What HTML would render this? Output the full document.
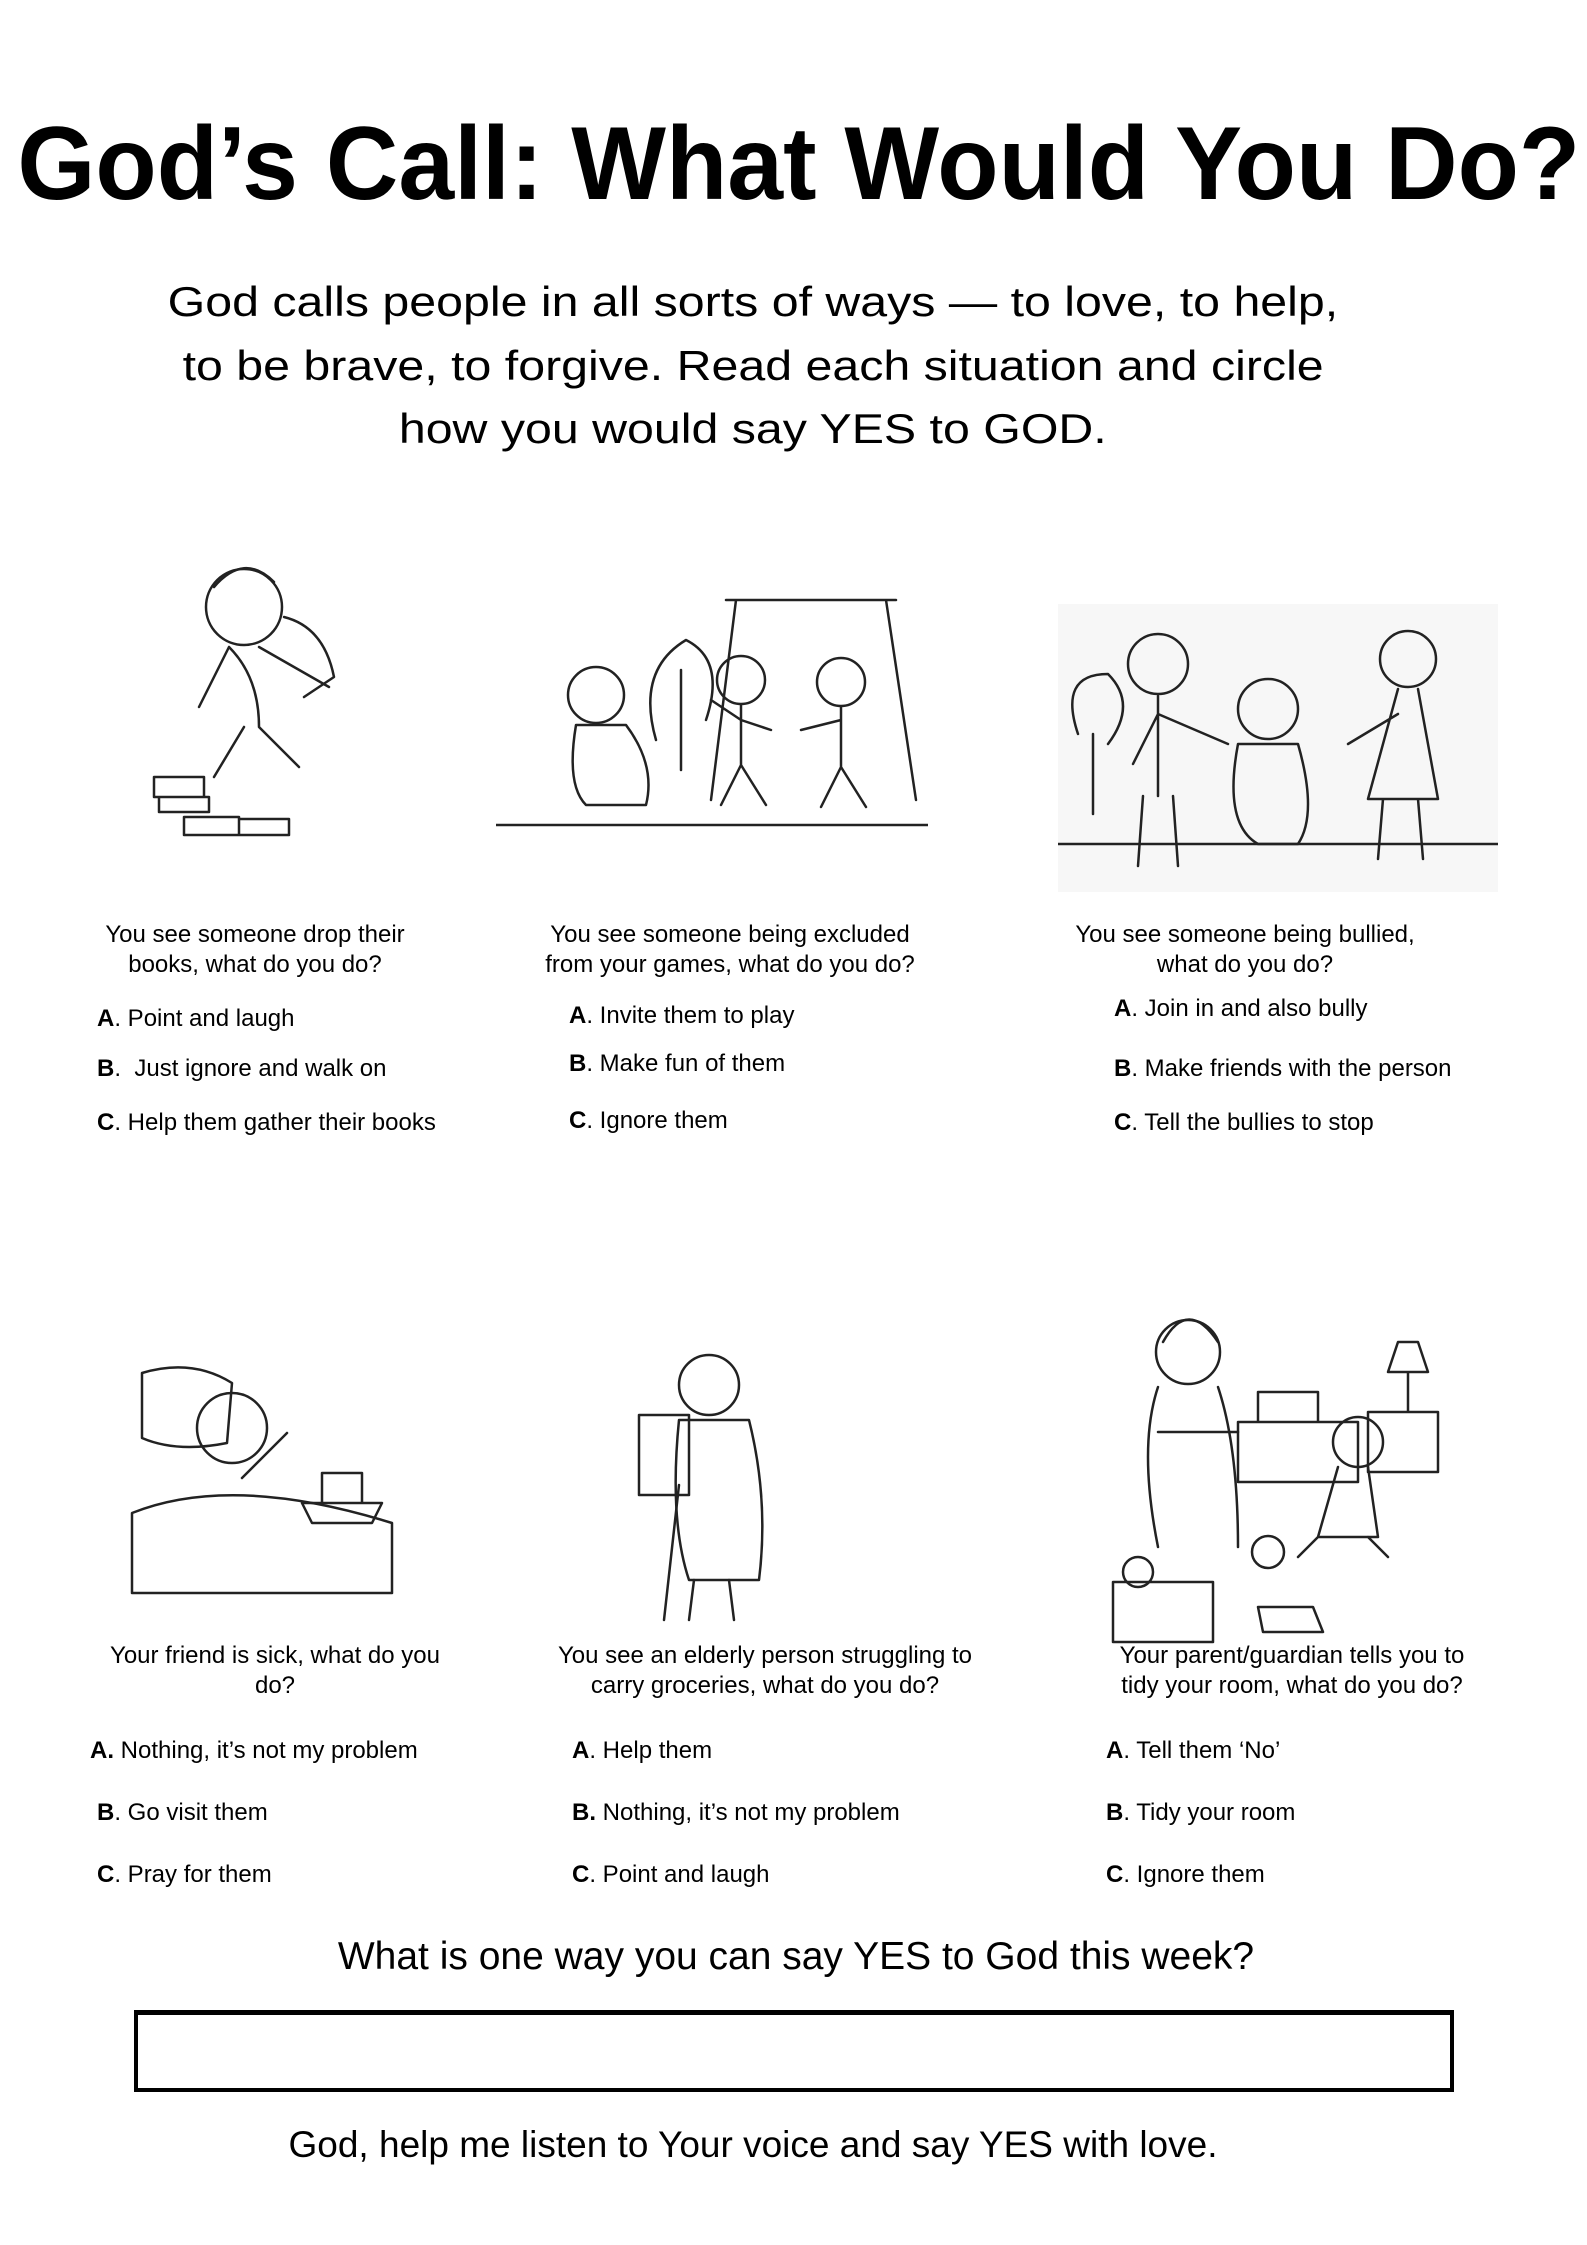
<!DOCTYPE html>
<html><head><meta charset="utf-8">
<style>
html,body{margin:0;padding:0;background:#fff;}
body{width:1587px;height:2245px;position:relative;overflow:hidden;font-family:"Liberation Sans",sans-serif;color:#000;}
.a{position:absolute;white-space:nowrap;line-height:1;}
.t{left:-11px;width:1587px;text-align:center;top:112px;font-size:104px;font-weight:bold;}
.t span{display:inline-block;transform:scaleX(0.965);transform-origin:center;}
.sub{font-size:42px;text-align:center;width:1400px;left:53px;}
.sub span{display:inline-block;transform:scaleX(1.15);}
.q{font-size:24px;text-align:center;width:460px;}
.o{font-size:24px;}
svg{position:absolute;}
svg *{fill:none;stroke:#222;stroke-width:2.5;stroke-linecap:round;stroke-linejoin:round;}
</style></head><body>
<div class="a t"><span>God’s Call: What Would You Do?</span></div>
<div class="a sub" style="top:281px"><span>God calls people in all sorts of ways — to love, to help,</span></div>
<div class="a sub" style="top:345px"><span>to be brave, to forgive. Read each situation and circle</span></div>
<div class="a sub" style="top:408px"><span>how you would say YES to GOD.</span></div>

<svg style="left:144px;top:547px" width="240" height="316" viewBox="0 0 240 316">
<circle cx="100" cy="60" r="38"/><path d="M70 40 q30-35 60-5"/><path d="M85 100 l-30 60 M115 100 l70 40 M85 100 q30 30 30 80 l40 40 M100 180 l-30 50"/><path d="M140 70 q40 10 50 60 l-30 20"/>
<path d="M10 230 h50 v20 h-50z M15 250 h50 v15 h-50z M40 270 h55 v18 h-55z M95 272 h50 v16 h-50z"/>
</svg>
<svg style="left:496px;top:590px" width="432" height="252" viewBox="0 0 432 252">
<path d="M230 10 h170 M240 10 l-25 200 M390 10 l30 200"/><circle cx="100" cy="105" r="28"/><path d="M80 135 q-10 60 10 80 h60 q10-40-20-80z"/>
<circle cx="245" cy="90" r="24"/><path d="M245 115 v60 l-20 40 M245 175 l25 40 M245 130 l-30-20 M245 130 l30 10"/>
<circle cx="345" cy="92" r="24"/><path d="M345 117 v60 l-20 40 M345 177 l25 40 M345 130 l-40 10"/>
<path d="M160 150 q-20-70 30-100 q40 20 20 80 M185 80 v100"/><path d="M0 235 h432"/>
</svg>
<svg style="left:1058px;top:604px" width="440" height="288" viewBox="0 0 440 288"><rect x="0" y="0" width="440" height="288" style="stroke:none;fill:#f7f7f7"/>
<circle cx="100" cy="60" r="30"/><path d="M100 92 v100 M85 192 l-5 70 M115 192 l5 70 M100 110 l70 30 M100 110 l-25 50"/>
<circle cx="210" cy="105" r="30"/><path d="M180 140 q-15 80 20 100 h40 q20-30 0-100z"/>
<circle cx="350" cy="55" r="28"/><path d="M340 85 l-30 110 h70 l-20-110 M325 195 l-5 60 M360 195 l5 60 M340 110 l-50 30"/>
<path d="M20 130 q-20-60 30-60 q30 30 0 70 M35 130 v80"/><path d="M0 240 h440"/>
</svg>

<div class="a q" style="left:25px;top:923px">You see someone drop their</div>
<div class="a q" style="left:25px;top:953px">books, what do you do?</div>
<div class="a q" style="left:500px;top:923px">You see someone being excluded</div>
<div class="a q" style="left:500px;top:953px">from your games, what do you do?</div>
<div class="a q" style="left:1015px;top:923px">You see someone being bullied,</div>
<div class="a q" style="left:1015px;top:953px">what do you do?</div>

<div class="a o" style="left:97px;top:1007px"><b>A</b>. Point and laugh</div>
<div class="a o" style="left:97px;top:1057px"><b>B</b>.&nbsp; Just ignore and walk on</div>
<div class="a o" style="left:97px;top:1111px"><b>C</b>. Help them gather their books</div>
<div class="a o" style="left:569px;top:1004px"><b>A</b>. Invite them to play</div>
<div class="a o" style="left:569px;top:1052px"><b>B</b>. Make fun of them</div>
<div class="a o" style="left:569px;top:1109px"><b>C</b>. Ignore them</div>
<div class="a o" style="left:1114px;top:997px"><b>A</b>. Join in and also bully</div>
<div class="a o" style="left:1114px;top:1057px"><b>B</b>. Make friends with the person</div>
<div class="a o" style="left:1114px;top:1111px"><b>C</b>. Tell the bullies to stop</div>

<svg style="left:122px;top:1353px" width="282" height="260" viewBox="0 0 282 260">
<path d="M20 20 q50-15 90 10 l-5 60 q-50 10-85-5z"/><circle cx="110" cy="75" r="35"/><path d="M10 160 q100-40 260 10 v70 h-260z"/><path d="M180 150 h80 l-10 20 h-60z M200 120 h40 v30 h-40z"/><path d="M120 125 l45-45"/>
</svg>
<svg style="left:619px;top:1345px" width="172" height="281" viewBox="0 0 172 281">
<circle cx="90" cy="40" r="30"/><path d="M60 75 q-10 100 10 160 h70 q10-80-10-160z"/><path d="M20 70 h50 v80 h-50z"/><path d="M60 140 l-15 135 M75 235 l-5 40 M110 235 l5 40"/>
</svg>
<svg style="left:1108px;top:1302px" width="338" height="346" viewBox="0 0 338 346">
<circle cx="80" cy="50" r="32"/><path d="M55 40 q25-45 55 0"/><path d="M50 85 q-20 60 0 160 M110 85 q20 60 20 160 M50 130 h80"/><path d="M130 120 h120 v60 h-120z M150 90 h60 v30 h-60z"/>
<circle cx="250" cy="140" r="25"/><path d="M230 165 l-20 70 h60 l-10-70 M210 235 l-20 20 M260 235 l20 20"/><rect x="5" y="280" width="100" height="60"/><circle cx="30" cy="270" r="15"/><circle cx="160" cy="250" r="16"/><path d="M150 305 h55 l10 25 h-60z"/><path d="M290 40 h20 l10 30 h-40z M300 70 v40 M260 110 h70 v60 h-70z"/>
</svg>

<div class="a q" style="left:45px;top:1644px">Your friend is sick, what do you</div>
<div class="a q" style="left:45px;top:1674px">do?</div>
<div class="a q" style="left:535px;top:1644px">You see an elderly person struggling to</div>
<div class="a q" style="left:535px;top:1674px">carry groceries, what do you do?</div>
<div class="a q" style="left:1062px;top:1644px">Your parent/guardian tells you to</div>
<div class="a q" style="left:1062px;top:1674px">tidy your room, what do you do?</div>

<div class="a o" style="left:90px;top:1739px"><b>A.</b> Nothing, it’s not my problem</div>
<div class="a o" style="left:97px;top:1801px"><b>B</b>. Go visit them</div>
<div class="a o" style="left:97px;top:1863px"><b>C</b>. Pray for them</div>
<div class="a o" style="left:572px;top:1739px"><b>A</b>. Help them</div>
<div class="a o" style="left:572px;top:1801px"><b>B.</b> Nothing, it’s not my problem</div>
<div class="a o" style="left:572px;top:1863px"><b>C</b>. Point and laugh</div>
<div class="a o" style="left:1106px;top:1739px"><b>A</b>. Tell them ‘No’</div>
<div class="a o" style="left:1106px;top:1801px"><b>B</b>. Tidy your room</div>
<div class="a o" style="left:1106px;top:1863px"><b>C</b>. Ignore them</div>

<div class="a" style="left:0;width:1592px;text-align:center;top:1937px;font-size:39px">What is one way you can say YES to God this week?</div>
<div class="a" style="left:134px;top:2010px;width:1312px;height:73px;border:4px solid #000;border-top-width:5px;"></div>
<div class="a" style="left:0;width:1506px;text-align:center;top:2126px;font-size:37px">God, help me listen to Your voice and say YES with love.</div>
</body></html>
